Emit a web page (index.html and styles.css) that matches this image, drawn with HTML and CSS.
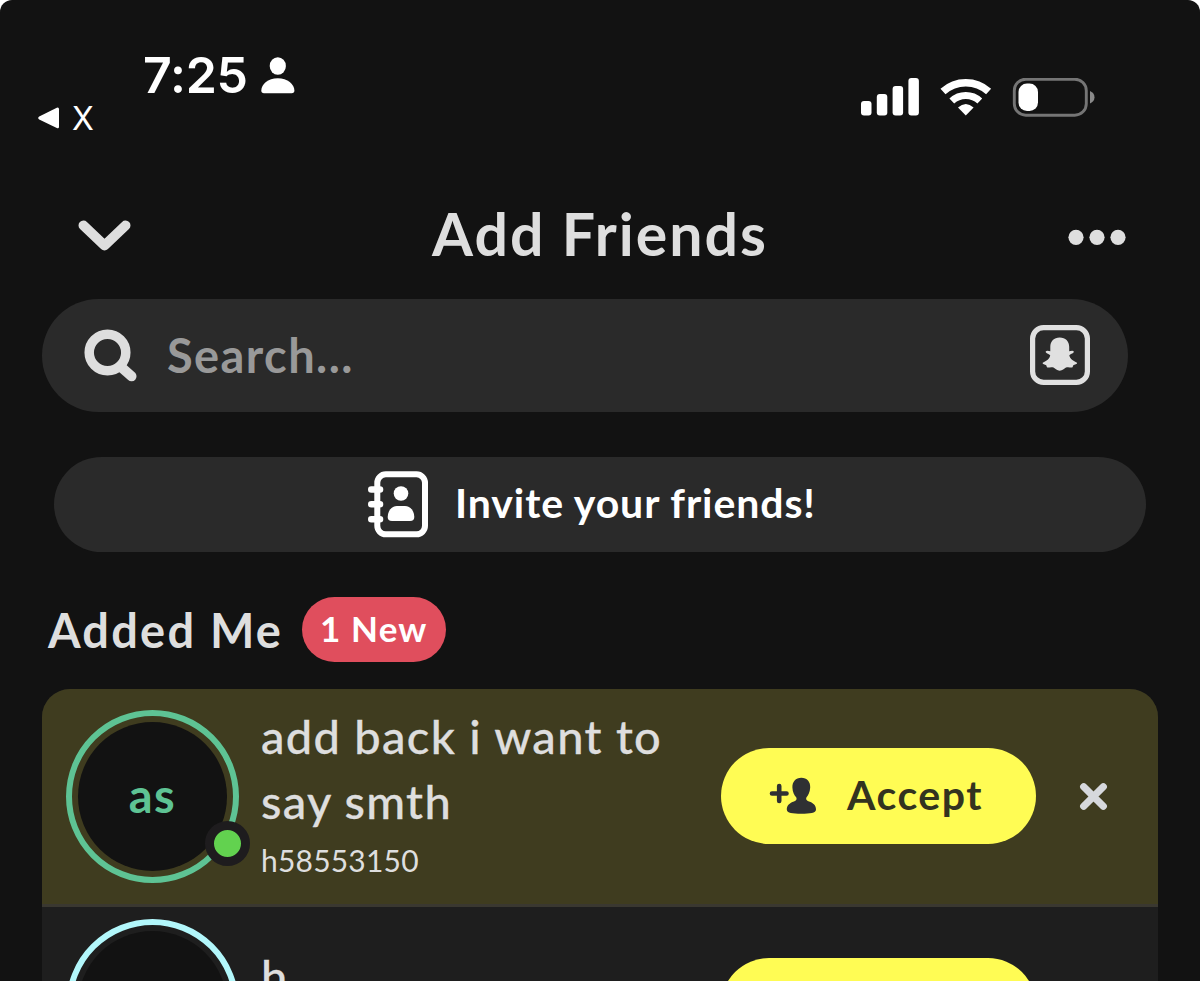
FILE: index.html
```html
<!DOCTYPE html>
<html lang="en">
<head>
    <meta charset="UTF-8">
    <title>Add Friends</title>
    <link rel="stylesheet" href="styles.css">
</head>
<body>
    <div class="screen">
        <div class="status-bar">
            <div class="status-left">
                <div class="clock">
                    <span class="time">7:25</span>
                    <svg class="focus-icon" width="34" height="37" viewBox="0 0 34 37" fill="#fff">
                        <ellipse cx="16.8" cy="9" rx="8.1" ry="8.8"/>
                        <path d="M3 36.3C1.2 36.3.3 35.300.3 33.500.3 27.500 7 21.300 16.800 21.300S33.400 27.500 33.400 33.500C33.400 35.300 32.500 36.300 30.700 36.300Z"/>
                    </svg>
                </div>
                <div class="back-app">
                    <svg width="22" height="22" viewBox="0 0 22 22" fill="#fff">
                        <path d="M1.200 9.500 18.800.8Q21 0 21 2.200V19.800Q21 22 18.800 21.100L1.200 12.500Q-.8 11 1.200 9.500Z"/>
                    </svg>
                    <span>X</span>
                </div>
            </div>
            <div class="status-right">
                <svg width="59" height="38" viewBox="0 0 59 38" fill="#fff">
                    <rect x="0" y="23" width="10.500" height="14.500" rx="3"/>
                    <rect x="15.800" y="16" width="10.500" height="21.500" rx="3"/>
                    <rect x="31.600" y="8" width="10.500" height="29.500" rx="3"/>
                    <rect x="47.400" y="0" width="10.500" height="37.500" rx="3"/>
                </svg>
                <svg width="52" height="38" viewBox="0 0 52 38" fill="none" stroke="#fff">
                    <path d="M3 13.500A34 34 0 0 1 48.600 13.500" stroke-width="7.500"/>
                    <path d="M11.800 23A20.500 20.500 0 0 1 39.800 23" stroke-width="7"/>
                    <path d="M25.800 37.500 18 29.500Q25.800 22.500 33.600 29.500Z" fill="#fff" stroke="none"/>
                </svg>
                <svg width="83" height="40" viewBox="0 0 83 40">
                    <rect x="2.300" y="1.200" width="72" height="36" rx="11.500" fill="none" stroke="#757575" stroke-width="2.900"/>
                    <rect x="6.500" y="5.500" width="19.500" height="27.500" rx="8.500" fill="#fff"/>
                    <path d="M78 13Q82.500 15 82.500 19.200T78 25.500Z" fill="#8a8a8a"/>
                </svg>
            </div>
        </div>

        <div class="header">
            <svg width="54" height="33" viewBox="0 0 54 33" fill="none" stroke="#dedede" stroke-width="10" stroke-linecap="round" stroke-linejoin="round">
                <path d="M5.500 5.500 26.500 25.500 47.500 5.500"/>
            </svg>
            <h1>Add Friends</h1>
            <svg class="more" width="58" height="18" viewBox="0 0 58 18" fill="#dedede">
                <circle cx="8" cy="10.300" r="7.600"/>
                <circle cx="29" cy="10.300" r="7.600"/>
                <circle cx="50" cy="10.300" r="7.600"/>
            </svg>
        </div>

        <div class="search">
            <svg width="54" height="54" viewBox="0 0 54 54" fill="none" stroke="#dedede">
                <circle cx="23.500" cy="24.500" r="18.300" stroke-width="9.500"/>
                <path d="M36.500 38.500 47.500 48.300" stroke-width="10" stroke-linecap="round"/>
            </svg>
            <span class="placeholder">Search...</span>
            <svg width="60" height="60" viewBox="0 0 60 60">
                <rect x="2.600" y="2.600" width="54.800" height="54.800" rx="11" fill="none" stroke="#e0e0e0" stroke-width="5.200"/>
                <path fill="#e0e0e0" d="M29.700 12.600C35.500 12.600 39.200 16.500 39.200 21.800V26.200C40.500 26.200 42.800 25 43.800 26.500 44.300 28.300 40.800 28.600 39.300 30.300 39.800 34 43.500 36 47 37.800 47.500 39.300 44.500 39.500 43.300 40.200 42.800 41 43 42.200 42 42.500 40.200 42.600 38 41.800 36 42.600 34 43.800 32.500 45.700 29.700 45.700 27 45.700 25.500 43.800 23.500 42.600 21.500 41.800 19.200 42.600 17.500 42.500 16.500 42.200 16.800 41 16.200 40.200 15 39.500 12.200 39.300 12.700 37.800 16.500 36 19.700 34 20.200 30.300 18.800 28.600 15.200 28.300 15.700 26.500 16.800 25 19 26.200 20.300 26.200V21.800C20.300 16.500 24 12.600 29.700 12.600Z"/>
            </svg>
        </div>

        <div class="invite">
            <svg width="61" height="67" viewBox="0 0 61 67">
                <rect x="9.300" y="3.300" width="47.700" height="60" rx="8.500" fill="none" stroke="#fff" stroke-width="6"/>
                <path d="M3.300 18.500H12M3.300 33.300H12M3.300 48.200H12" stroke="#fff" stroke-width="6.600" stroke-linecap="round"/>
                <circle cx="33" cy="22.500" r="7.300" fill="#fff"/>
                <path d="M24 50C21 50 19.700 48.500 19.700 46 19.700 39 24.500 35 29 35H37C41.500 35 46.300 39 46.300 46 46.300 48.500 45 50 42 50Z" fill="#fff"/>
            </svg>
            <span>Invite your friends!</span>
        </div>

        <div class="section-title">
            <h2>Added Me</h2>
            <span class="badge">1 New</span>
        </div>

        <div class="requests">
            <div class="request is-new">
                <div class="avatar">
                    <div class="avatar-inner">as</div>
                    <span class="online"></span>
                </div>
                <div class="info">
                    <div class="name">add back i want to<br>say smth</div>
                    <div class="username">h58553150</div>
                </div>
                <div class="accept">
                    <svg width="48" height="38" viewBox="0 0 48 38" fill="#2f3033">
                        <path d="M3 16.500H17.500M10.200 9V24" stroke="#2f3033" stroke-width="4.600" stroke-linecap="round"/>
                        <path d="M32.300.8C38 .8 41.500 5 41.200 10.500 41 15 39 18.500 37.500 20.300 36.500 22.500 37.500 23.600 40 24.500 44.500 26 47 28.500 47 32.500 47 36 41 36.800 32.300 36.800S17.800 36 17.800 32.500C17.800 28.500 20.500 26 25 24.500 27.300 23.600 28.200 22.500 27.200 20.300 25.500 18.500 23.500 15 23.400 10.500 23.200 5 26.700 .8 32.300 .8Z"/>
                    </svg>
                    <span>Accept</span>
                </div>
                <svg class="dismiss" width="30" height="30" viewBox="0 0 30 30" stroke="#d6d8dc" stroke-width="7.200" stroke-linecap="round">
                    <path d="M4.700 5.700 24.300 25.300M24.300 5.700 4.700 25.300"/>
                </svg>
            </div>
            <div class="request">
                <div class="avatar avatar-blue">
                    <div class="avatar-inner"></div>
                </div>
                <div class="info">
                    <div class="name">h</div>
                </div>
                <div class="accept"></div>
            </div>
        </div>
    </div>
</body>
</html>
```
FILE: styles.css
```css
:root {
    --background: #121212;
    --field: #2a2a2a;
    --row: #1e1e1e;
    --row-new: #3f3c1f;
    --text: #dedede;
    --muted: #999999;
    --yellow: #fffc54;
    --red: #e04e5d;
    --green: #5ec394;
    --blue: #b2f7fb;
}

* {
    margin: 0;
    padding: 0;
    box-sizing: border-box;
}

body {
    background: #fff;
    height: 981px;
    overflow: hidden;
}

svg {
    display: block;
    flex: none;
}

.screen {
    width: 1200px;
    height: 981px;
    overflow: hidden;
    background: var(--background);
    border-radius: 12px 12px 0 0;
    color: var(--text);
    font-family: "Lato", "Open Sans", sans-serif;
    white-space: nowrap;
}

/* status bar */
.status-bar {
    display: flex;
    justify-content: space-between;
    height: 190px;
    padding: 46px 105px 0 38px;
    font-family: "Inter", sans-serif;
    color: #fff;
}

.clock {
    display: flex;
    align-items: center;
    height: 58px;
    margin-left: 105px;
    gap: 13px;
}

.time {
    font-size: 50px;
    font-weight: 600;
    line-height: 58px;
    letter-spacing: -0.2px;
}

.back-app {
    display: flex;
    align-items: center;
    height: 28px;
    gap: 12px;
    font-size: 32px;
    line-height: 28px;
}

.back-app span {
    padding-top: 2px;
}

.status-right {
    display: flex;
    height: 40px;
    margin-top: 32px;
    gap: 20px;
}

/* title */
.header {
    display: flex;
    align-items: center;
    justify-content: space-between;
    height: 92px;
    padding: 0 74px 0 78px;
}

h1 {
    padding-bottom: 5px;
    font-size: 59px;
    font-weight: 700;
    line-height: 72px;
    letter-spacing: 2px;
}

/* search field */
.search {
    display: flex;
    align-items: center;
    width: 1086px;
    height: 113px;
    margin: 16.500px 0 0 42px;
    padding: 0 38px 0 42px;
    background: var(--field);
    border-radius: 57px;
}

.placeholder {
    flex: 1;
    margin-left: 29px;
    color: var(--muted);
    font-size: 47px;
    font-weight: 700;
    letter-spacing: 1.400px;
}

.invite {
    display: flex;
    align-items: center;
    width: 1092px;
    height: 95px;
    margin: 45.500px 0 0 54px;
    padding-left: 314px;
    gap: 26px;
    background: var(--field);
    border-radius: 48px;
    color: #fff;
    font-size: 41px;
    font-weight: 700;
    letter-spacing: 0.900px;
}

.invite span {
    padding-bottom: 4px;
}

/* added me */
.section-title {
    display: flex;
    align-items: center;
    height: 65px;
    margin: 45px 0 0 48px;
}

h2 {
    width: 253.500px;
    padding-top: 1px;
    font-size: 47px;
    font-weight: 700;
    letter-spacing: 2.200px;
}

.badge {
    width: 144.500px;
    height: 65px;
    border-radius: 33px;
    background: var(--red);
    color: #fff;
    font-size: 35px;
    font-weight: 700;
    line-height: 62px;
    letter-spacing: 1.100px;
    text-align: center;
}

.requests {
    width: 1116px;
    margin: 27px 0 0 42px;
    border-radius: 28px 28px 0 0;
    overflow: hidden;
    background: var(--row);
}

.request {
    display: flex;
    align-items: center;
    height: 198px;
    padding-left: 24px;
}

.is-new {
    height: 217.500px;
    background: var(--row-new);
    border-bottom: 3px solid #3a3830;
}

.avatar {
    position: relative;
    flex: none;
    width: 173px;
    height: 173px;
    padding: 6px;
    border: 6px solid var(--green);
    border-radius: 50%;
}

.avatar-blue {
    border-color: var(--blue);
}

.avatar-inner {
    height: 149px;
    border-radius: 50%;
    background: var(--background);
    color: var(--green);
    font-size: 47px;
    font-weight: 700;
    line-height: 147px;
    letter-spacing: 1.500px;
    text-align: center;
}

.online {
    position: absolute;
    right: -17px;
    bottom: 11px;
    width: 45px;
    height: 45px;
    border: 9px solid #1e1c1e;
    border-radius: 50%;
    background: #62d24f;
}

.info {
    width: 460px;
    min-height: 124px;
    margin-left: 22px;
}

.name {
    font-size: 47px;
    font-weight: 500;
    line-height: 64.500px;
    letter-spacing: 1.300px;
    -webkit-text-stroke: 0.300px;
}

.username {
    font-size: 30px;
    line-height: 55px;
    letter-spacing: 0.200px;
}

.accept {
    display: flex;
    align-items: center;
    justify-content: center;
    flex: none;
    width: 315px;
    height: 96px;
    padding-right: 5px;
    gap: 30px;
    border-radius: 48px;
    background: var(--yellow);
    color: #33331f;
    font-size: 41px;
    font-weight: 700;
    letter-spacing: 1.500px;
}

.accept span {
    padding-bottom: 3px;
}

.dismiss {
    margin-left: 43px;
}
```
